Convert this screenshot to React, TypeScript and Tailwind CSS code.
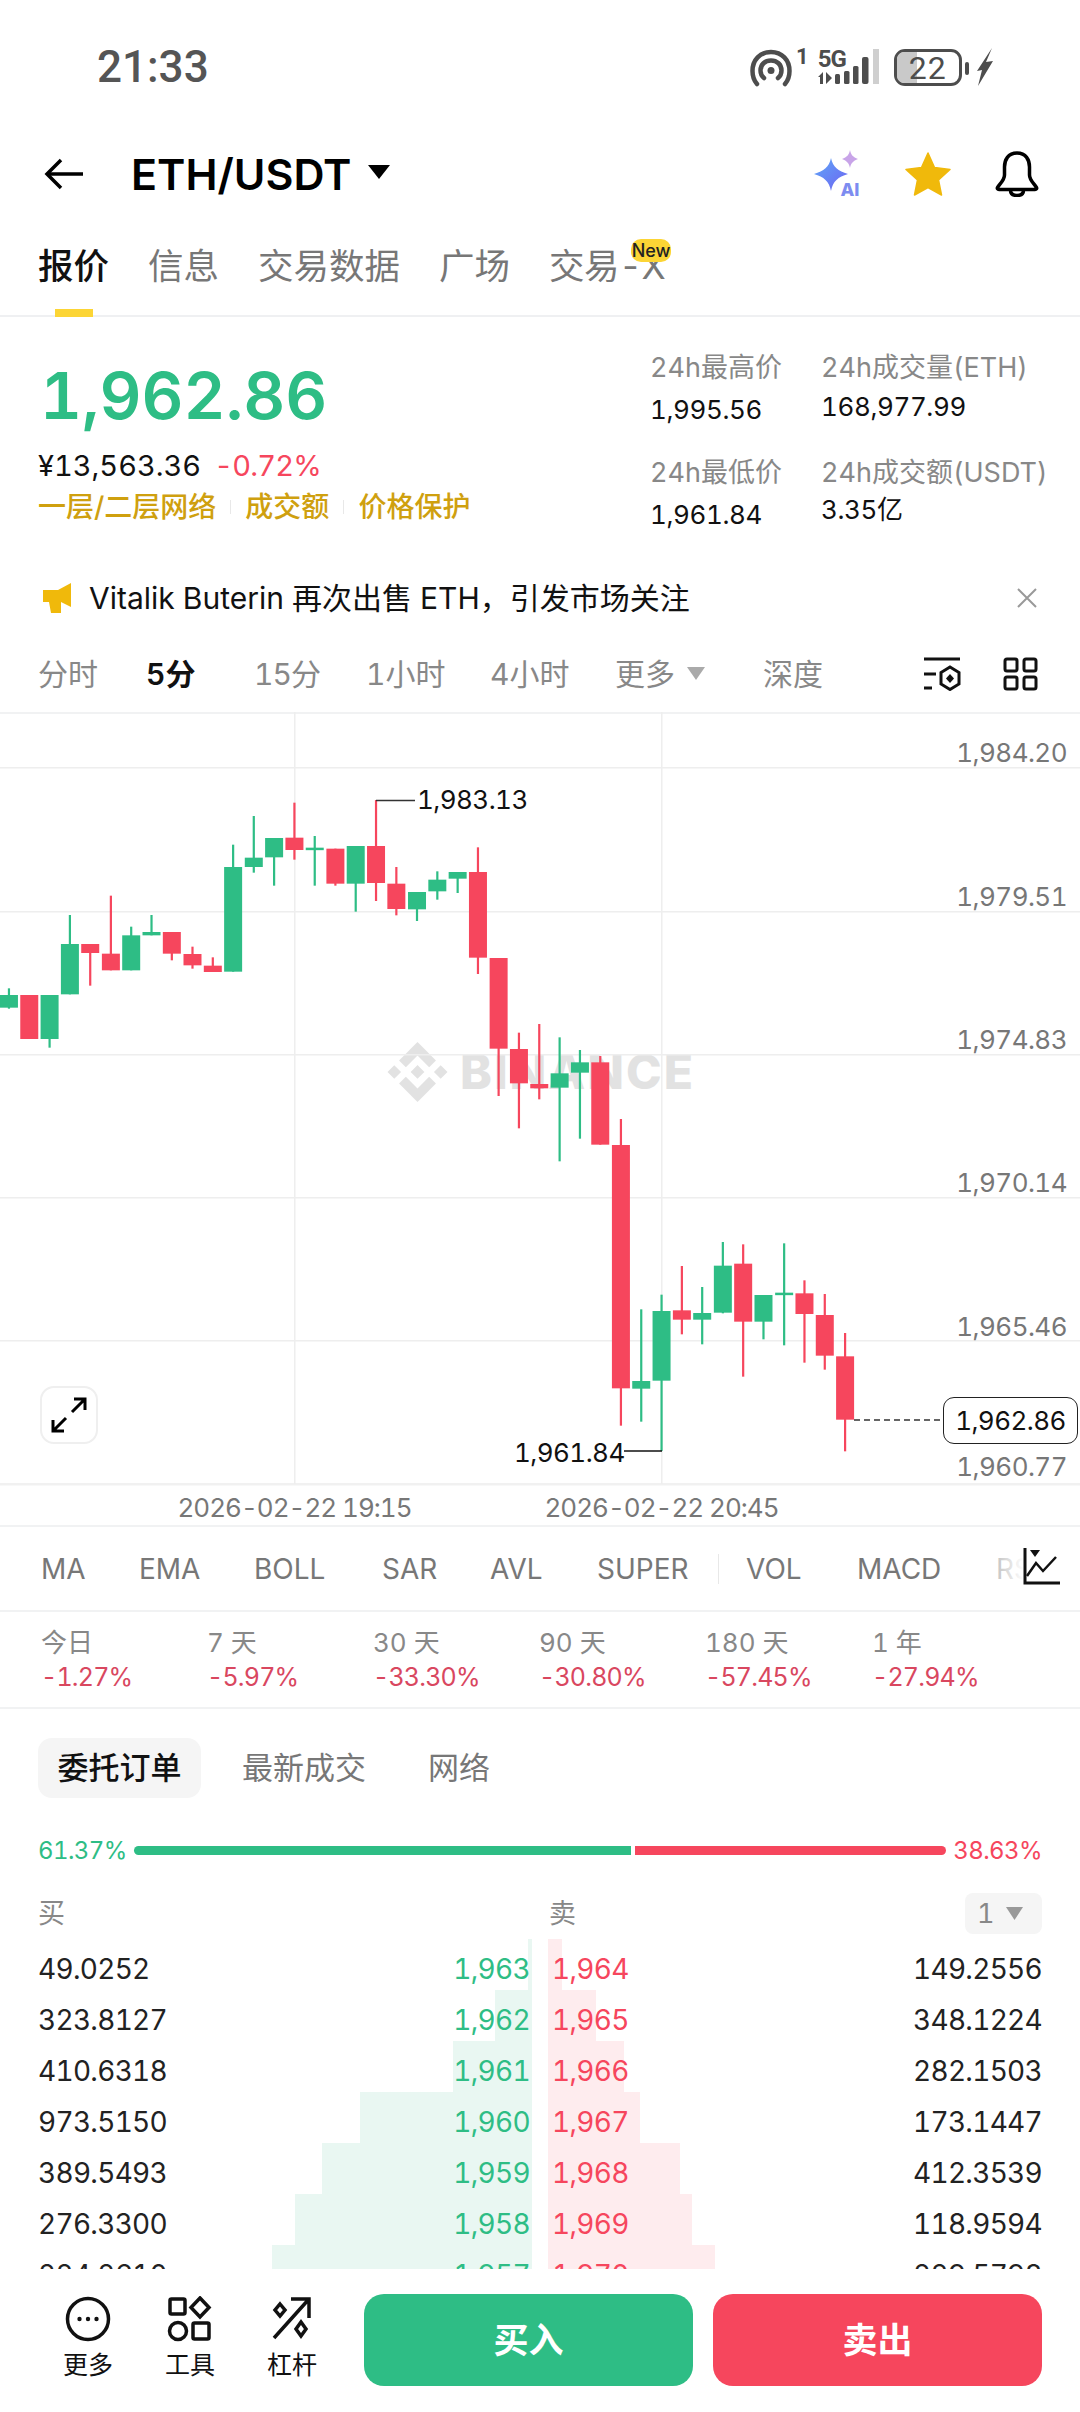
import { useMemo } from "react";

const GREEN = "#2EBD85";
const RED = "#F6465D";

// color, x, wick top, body top, body bottom, wick bottom (measured off the reference crops)
const candlesLeft: [string, number, number, number, number, number][] = [
  ["g", 26, 745, 765, 803, 806],
  ["r", 85, 765, 765, 897, 897],
  ["g", 144, 765, 765, 897, 923],
  ["g", 203, 525, 612, 763, 763],
  ["r", 262, 612, 612, 639, 737],
  ["r", 322, 467, 641, 691, 691],
  ["g", 381, 560, 586, 691, 691],
  ["g", 440, 525, 576, 586, 586],
  ["r", 499, 576, 576, 641, 661],
  ["r", 559, 620, 642, 676, 686],
  ["r", 618, 652, 677, 696, 696],
  ["g", 677, 314, 381, 695, 695],
  ["g", 737, 228, 353, 381, 398],
  ["g", 796, 294, 294, 352, 437],
  ["r", 855, 188, 293, 330, 359],
  ["g", 914, 288, 323, 330, 437],
  ["r", 974, 326, 326, 431, 437],
  ["g", 1033, 318, 318, 431, 515],
  ["r", 1092, 180, 318, 429, 483],
  ["r", 1151, 381, 431, 507, 526],
  ["g", 1211, 456, 456, 508, 543],
  ["g", 1270, 394, 419, 454, 479],
  ["g", 1329, 396, 396, 416, 459],
  ["r", 1388, 322, 396, 653, 702],
  ["r", 1448, 654, 654, 926, 1068],
  ["r", 1507, 878, 927, 1030, 1165],
  ["r", 1566, 852, 1032, 1045, 1078],
];

const candlesRight: [string, number, number, number, number, number][] = [
  ["g", 57, 892, 1000, 1043, 1264],
  ["g", 116, 930, 967, 998, 1196],
  ["r", 175, 948, 967, 1214, 1214],
  ["r", 235, 1137, 1215, 1945, 2057],
  ["g", 294, 1708, 1923, 1946, 2045],
  ["g", 353, 1664, 1713, 1922, 2133],
  ["r", 412, 1578, 1711, 1739, 1783],
  ["g", 471, 1641, 1719, 1739, 1813],
  ["g", 531, 1506, 1577, 1718, 1720],
  ["r", 590, 1513, 1571, 1745, 1910],
  ["g", 649, 1665, 1665, 1745, 1798],
  ["g", 709, 1510, 1658, 1663, 1816],
  ["r", 768, 1621, 1660, 1722, 1868],
  ["r", 827, 1662, 1725, 1847, 1889],
  ["r", 886, 1779, 1849, 2039, 2134],
];

const axisLabels = [
  { text: "1,984.20", cls: "top-[27px]" },
  { text: "1,979.51", cls: "top-[171px]" },
  { text: "1,974.83", cls: "top-[314px]" },
  { text: "1,970.14", cls: "top-[457px]" },
  { text: "1,965.46", cls: "top-[601px]" },
  { text: "1,960.77", cls: "top-[741px]" },
];

const returnsRow = [
  ["今日", "-1.27%"],
  ["7 天", "-5.97%"],
  ["30 天", "-33.30%"],
  ["90 天", "-30.80%"],
  ["180 天", "-57.45%"],
  ["1 年", "-27.94%"],
];

const bookRows = [
  { bid: "49.0252", bp: "1,963", ap: "1,964", ask: "149.2556", bw: 4, aw: 14 },
  { bid: "323.8127", bp: "1,962", ap: "1,965", ask: "348.1224", bw: 37, aw: 48 },
  { bid: "410.6318", bp: "1,961", ap: "1,966", ask: "282.1503", bw: 79, aw: 76 },
  { bid: "973.5150", bp: "1,960", ap: "1,967", ask: "173.1447", bw: 172, aw: 92 },
  { bid: "389.5493", bp: "1,959", ap: "1,968", ask: "412.3539", bw: 210, aw: 132 },
  { bid: "276.3300", bp: "1,958", ap: "1,969", ask: "118.9594", bw: 237, aw: 144 },
  { bid: "224.2610", bp: "1,957", ap: "1,970", ask: "229.5798", bw: 260, aw: 167 },
];

function StatusBar() {
  return (
    <div className="relative h-[130px] shrink-0">
      <div className="pl-[97px] pt-[42px] font-[family-name:Roboto,sans-serif] text-[44px] leading-[50px] font-medium text-[#555]">
        21:33
      </div>
      <div className="absolute left-[750px] top-[47px] flex items-start text-[#4d4d4d]">
        <svg width="42" height="38" viewBox="0 0 42 38" className="mt-[2px]" fill="none" stroke="#4d4d4d" strokeWidth="4.5" strokeLinecap="round">
          <path d="M7 35C3.5 31 2.5 26.500 2.500 22C2.500 11 10 3 21 3C32 3 39.500 11 39.500 22C39.500 26.500 38.500 31 35 35" />
          <path d="M14 29C11.500 27 10.500 24.500 10.500 21.500C10.500 15.500 15 11.500 21 11.500C27 11.500 31.500 15.500 31.500 21.500C31.500 24.500 30.500 27 28 29" />
          <circle cx="21" cy="21.500" r="3.500" fill="#4d4d4d" stroke="none" />
        </svg>
        <span className="ml-[4px] font-[family-name:Roboto,sans-serif] text-[22px] leading-[20px] font-bold">1</span>
        <div className="relative ml-[9px] h-[38px] w-[62px]">
          <span className="absolute left-0 top-[1px] font-[family-name:Roboto,sans-serif] text-[24px] leading-[22px] font-bold tracking-[-1px]">5G</span>
          <svg width="62" height="38" viewBox="0 0 62 38" className="absolute left-0 top-0">
            <path d="M0 30L5 25V37H2V30ZM8 25L14 31L8 37Z" fill="#4d4d4d" />
            <rect x="17" y="27" width="5" height="10" rx="1.500" fill="#4d4d4d" />
            <rect x="26" y="24" width="5.500" height="13" rx="1.500" fill="#4d4d4d" />
            <rect x="35" y="19" width="5.500" height="18" rx="1.500" fill="#4d4d4d" />
            <rect x="44" y="10" width="6.500" height="27" rx="2" fill="#4d4d4d" />
            <rect x="55" y="2" width="6" height="35" fill="#cfcfcf" />
          </svg>
        </div>
        <div className="relative ml-[14px] mt-[2px] flex h-[37px] w-[68px] items-center justify-center rounded-[11px] border-[3.500px] border-[#4d4d4d]">
          <div className="absolute bottom-0 left-0 top-0 w-[20px] rounded-l-[7px] bg-[#c9c9c9]" />
          <span className="relative font-[family-name:Roboto,sans-serif] text-[32px] leading-[30px] font-normal tracking-[1px]">22</span>
        </div>
        <div className="ml-[3px] mt-[15px] h-[13px] w-[4px] rounded-[2px] bg-[#4d4d4d]" />
        <svg width="16" height="38" viewBox="0 0 16 38" className="ml-[8px] mt-[1px]">
          <path d="M15 0L9 14L16 13L1 38L5 22L0 23Z" fill="#4d4d4d" />
        </svg>
      </div>
    </div>
  );
}

function Header() {
  return (
    <div className="flex h-[88px] shrink-0 items-center">
      <svg width="40" height="32" viewBox="0 0 40 32" className="ml-[44px]" fill="none" stroke="#000" strokeWidth="3.500">
        <path d="M17 2L3 16L17 30" />
        <path d="M3 16H39" />
      </svg>
      <span className="ml-[47px] text-[43px] leading-[48px] font-semibold text-black">ETH/USDT</span>
      <svg width="22" height="14" viewBox="0 0 22 14" className="ml-[17px] mt-[-4px]">
        <path d="M0 0H22L11 14Z" fill="#000" />
      </svg>
      <div className="relative ml-[424px] h-[48px] w-[50px]">
        <svg width="50" height="48" viewBox="0 0 50 48" className="absolute left-0 top-0">
          <defs>
            <linearGradient id="aistar" x1="0" y1="0" x2="1" y2="1">
              <stop offset="0" stopColor="#5ea8f7" />
              <stop offset="1" stopColor="#6f62f2" />
            </linearGradient>
          </defs>
          <path d="M17 8C19 17 24 21 34 24C24 27 19 31 17 41C15 31 10 27 0 24C10 21 15 17 17 8Z" fill="url(#aistar)" />
          <path d="M36 0C37 5 39 7 44 9C39 11 37 13 36 18C35 13 33 11 28 9C33 7 35 5 36 0Z" fill="#c8a4e8" />
        </svg>
        <span className="absolute left-[26px] top-[31px] text-[18px] leading-[18px] font-extrabold text-[#7d8cf0]">AI</span>
      </div>
      <svg width="46" height="44" viewBox="0 0 46 44" className="ml-[41px]">
        <path d="M23 1L29.500 15.500L45 17.500L33.500 28L36.500 43L23 35.500L9.500 43L12.500 28L1 17.500L16.500 15.500Z" fill="#F0B90B" stroke="#F0B90B" strokeWidth="1.500" strokeLinejoin="round" />
      </svg>
      <svg width="44" height="46" viewBox="0 0 44 46" className="ml-[44px]" fill="none" stroke="#000" strokeWidth="3.500" strokeLinejoin="round">
        <path d="M22 2C13 2 9.500 9 9.500 16V24C9.500 29 5.500 32 2.500 36.500C2 37.500 2.500 38.500 4 38.500H40C41.500 38.500 42 37.500 41.500 36.500C38.500 32 34.500 29 34.500 24V16C34.500 9 31 2 22 2Z" />
        <path d="M15.500 39C15.500 42.500 18 44.500 22 44.500C26 44.500 28.500 42.500 28.500 39" />
      </svg>
    </div>
  );
}

function Tabs() {
  return (
    <div className="flex h-[99px] shrink-0 items-start gap-[39px] border-b-2 border-[#eff0f2] pl-[38px] pt-[24px] text-[35.5px] leading-[50px] text-[#777]">
      <div className="relative h-[75px] font-medium text-[#111]">
        报价
        <div className="absolute bottom-0 left-[17px] h-[8px] w-[38px] bg-[#FCD535]" />
      </div>
      <div>信息</div>
      <div>交易数据</div>
      <div>广场</div>
      <div className="relative tracking-[-0.5px]">
        交易-X
        <span className="absolute left-[82px] top-[-3px] flex h-[23px] w-[40px] items-center justify-center rounded-[10px] bg-[#FCD535] text-[18px] leading-[18px] font-medium tracking-normal text-[#222]">
          New
        </span>
      </div>
    </div>
  );
}

function Stat({ label, value, valueClass }: { label: string; value: string; valueClass: string }) {
  return (
    <div className="h-[89px] whitespace-nowrap">
      <div className="text-[27px] leading-[34px] text-[#888]">{label}</div>
      <div className={`text-[26px] leading-[32px] tracking-[-0.4px] text-[#111] ${valueClass}`}>{value}</div>
    </div>
  );
}

function PriceBlock() {
  return (
    <div className="flex h-[243px] shrink-0">
      <div className="w-[611px] pl-[38px]">
        <div className="ml-[2px] mt-[42px] text-[65px] leading-[74px] font-semibold text-[#2EBD85]">1,962.86</div>
        <div className="mt-[15px] flex items-center text-[29px] leading-[36px] font-normal">
          <span className="text-[29px] text-[#111]">¥13,563.36</span>
          <span className="ml-[13px] tracking-[-0.8px] text-[#F6465D]">-0.72%</span>
        </div>
        <div className="mt-[4px] flex items-center text-[28px] leading-[38px] font-medium text-[#CFA00F]">
          <span>一层/二层网络</span>
          <span className="mx-[14px] h-[14px] w-[1px] bg-[#e8e8e8]" />
          <span>成交额</span>
          <span className="mx-[14px] h-[14px] w-[1px] bg-[#e8e8e8]" />
          <span>价格保护</span>
        </div>
      </div>
      <div className="grid w-[469px] grid-cols-[171px_1fr] pt-[34px] pl-[39px]">
        <Stat label="24h最高价" value="1,995.56" valueClass="mt-[9px]" />
        <Stat label="24h成交量(ETH)" value="168,977.99" valueClass="mt-[6px]" />
        <Stat label="24h最低价" value="1,961.84" valueClass="mt-[9px]" />
        <Stat label="24h成交额(USDT)" value="3.35亿" valueClass="mt-[4px]" />
      </div>
    </div>
  );
}

function Announcement() {
  return (
    <div className="flex h-[75px] shrink-0 items-center">
      <svg width="32" height="32" viewBox="0 0 32 32" className="ml-[42px]">
        <path d="M1 8H16L29 1V25L19 20V31H9L7 20H1Z" fill="#F0B90B" />
      </svg>
      <span className="ml-[15px] text-[30px] leading-[40px] text-[#111]">Vitalik Buterin 再次出售 ETH，引发市场关注</span>
      <svg width="22" height="22" viewBox="0 0 22 22" className="ml-auto mr-[42px]" fill="none" stroke="#999" strokeWidth="2">
        <path d="M2 2L20 20M20 2L2 20" />
      </svg>
    </div>
  );
}

function IntervalRow() {
  return (
    <div className="flex h-[77px] shrink-0 items-center pl-[38px] text-[30px] leading-[40px] text-[#888]">
      <span className="w-[108px]">分时</span>
      <span className="w-[108px] font-semibold text-[#111]">5分</span>
      <span className="w-[112px] tracking-[-1px]">15分</span>
      <span className="w-[124px]">1小时</span>
      <span className="w-[125px]">4小时</span>
      <span className="flex w-[148px] items-center">
        更多
        <svg width="18" height="13" viewBox="0 0 18 13" className="ml-[12px]">
          <path d="M0 0H18L9 13Z" fill="#aaa" />
        </svg>
      </span>
      <span className="w-[161px]">深度</span>
      <svg width="38" height="34" viewBox="0 0 38 34" fill="none" stroke="#111" strokeWidth="3">
        <path d="M0 2H36" />
        <path d="M0 17H12M0 31H8" />
        <path d="M26 10L35 15.500V27L26 32.500L17 27V15.500Z" />
        <path d="M26 17L30 21.500L26 26L22 21.500Z" fill="#111" stroke="none" />
      </svg>
      <svg width="35" height="34" viewBox="0 0 35 34" className="ml-[41px]" fill="none" stroke="#111" strokeWidth="3">
        <rect x="2" y="2" width="12" height="12" rx="2" />
        <rect x="21" y="2" width="12" height="12" rx="2" />
        <rect x="2" y="20" width="12" height="12" rx="2" />
        <rect x="21" y="20" width="12" height="12" rx="2" />
      </svg>
    </div>
  );
}

function Chart() {
  // candles are measured in crop units: x / 2.904, y = 740 + z / 3 on the page
  const candles = useMemo(() => {
    const py = (z: number) => 28 + z / 3;
    const build = (rows: typeof candlesLeft, base: number) =>
      rows.map(([c, x, wt, bt, bb, wb]) => ({
        fill: c === "g" ? GREEN : RED,
        cx: base + x / 2.904,
        wt: py(wt),
        bt: py(bt),
        bb: py(bb),
        wb: py(wb),
      }));
    return [...build(candlesLeft, 0), ...build(candlesRight, 540)];
  }, []);

  return (
    <div className="relative h-[813px] shrink-0 overflow-hidden">
      <div className="absolute left-[387px] top-[330px] flex items-center text-[#e2e2e2]">
        <svg width="61" height="60" viewBox="0 0 126.610 126.610" fill="#e2e2e2">
          <path d="M38.730 53.200l24.590-24.580 24.600 24.600 14.300-14.310L63.320 0 24.420 38.900l14.310 14.300z" />
          <path d="M0 63.310l14.300-14.310 14.310 14.310-14.310 14.300z" />
          <path d="M38.730 73.410l24.590 24.590 24.600-24.600 14.310 14.290-38.900 38.910-38.910-38.880-.02-.02z" />
          <path d="M98 63.310l14.300-14.310 14.310 14.300-14.310 14.320z" />
          <path d="M77.830 63.300L63.320 48.780 52.590 59.510l-1.240 1.230-2.540 2.540 14.510 14.500 14.510-14.470z" />
        </svg>
        <span className="ml-[12px] text-[48px] leading-[46px] font-extrabold tracking-[2px]">BINANCE</span>
      </div>
      <svg width="1080" height="813" viewBox="0 0 1080 813" className="absolute left-0 top-0">
        <rect x="0" y="0" width="1080" height="2" fill="#f1f2f3" />
        {[55, 199, 342, 485, 628].map((y) => (
          <rect key={y} x="0" y={y} width="1080" height="1.500" fill="#eeeeee" />
        ))}
        <rect x="0" y="771" width="1080" height="2.500" fill="#f1f1f1" />
        <rect x="294" y="0" width="1.500" height="772" fill="#eeeeee" />
        <rect x="661" y="0" width="1.500" height="772" fill="#eeeeee" />
        {candles.map((k) => (
          <g key={k.cx} fill={k.fill}>
            <rect x={k.cx - 1.1} y={k.wt} width="2.200" height={k.wb - k.wt} />
            <rect x={k.cx - 9} y={k.bt} width="18" height={Math.max(k.bb - k.bt, 2.500)} />
          </g>
        ))}
        <path d="M376 88.500H415" stroke="#333" strokeWidth="1.500" />
        <path d="M624 739H662" stroke="#111" strokeWidth="1.500" />
        <path d="M854 708H943" stroke="#333" strokeWidth="1.500" strokeDasharray="6 4" />
      </svg>

      {axisLabels.map((l) => (
        <div key={l.text} className={`absolute right-[13px] text-[26px] leading-[28px] tracking-[-0.55px] text-[#777] ${l.cls}`}>
          {l.text}
        </div>
      ))}
      <div className="absolute left-[417px] top-[74px] text-[26px] leading-[28px] tracking-[-0.55px] text-[#111]">1,983.13</div>
      <div className="absolute left-[514px] top-[727px] text-[26px] leading-[28px] tracking-[-0.55px] text-[#111]">1,961.84</div>
      <div className="absolute left-[943px] top-[685px] flex h-[47px] w-[135px] items-center justify-center rounded-[11px] border-[1.500px] border-[#222] bg-white text-[26px] leading-[28px] tracking-[-0.55px] text-[#111]">
        1,962.86
      </div>
      <div className="absolute left-[40px] top-[674px] flex h-[58px] w-[58px] items-center justify-center rounded-[14px] border-2 border-[#efefef] bg-white">
        <svg width="36" height="36" viewBox="0 0 36 36" fill="none" stroke="#000" strokeWidth="3">
          <path d="M21 15L34 2M23 2H34V13" />
          <path d="M15 21L2 34M13 34H2V23" />
        </svg>
      </div>
      <div className="absolute left-[165px] top-[782px] w-[259px] whitespace-nowrap text-center text-[26px] leading-[28px] tracking-[-1px] text-[#777]">2026-02-22 19:15</div>
      <div className="absolute left-[532px] top-[782px] w-[259px] whitespace-nowrap text-center text-[26px] leading-[28px] tracking-[-1px] text-[#777]">2026-02-22 20:45</div>
    </div>
  );
}

function IndicatorRow() {
  return (
    <div className="relative flex h-[85px] shrink-0 items-center border-t-2 border-[#f1f2f3] pl-[41px] text-[28px] leading-[36px] text-[#777]">
      <span className="w-[98px]">MA</span>
      <span className="w-[115px]">EMA</span>
      <span className="w-[128px]">BOLL</span>
      <span className="w-[108px]">SAR</span>
      <span className="w-[107px]">AVL</span>
      <span className="w-[121px]">SUPER</span>
      <span className="h-[30px] w-[28px] border-l border-[#e8e8e8]" />
      <span className="w-[111px]">VOL</span>
      <span className="w-[139px]">MACD</span>
      <span>RSI</span>
      <div className="absolute bottom-0 right-0 top-0 w-[94px] bg-gradient-to-r from-white/40 to-white to-40%" />
      <svg width="38" height="38" viewBox="0 0 38 38" className="absolute left-[1023px] top-[21px]" fill="none" stroke="#111" strokeWidth="3">
        <path d="M2 0V35H37" />
        <path d="M4 28L13 15L20 23L33 9" strokeWidth="2.500" />
        <path d="M7 2H17L12 9Z" fill="#111" stroke="none" />
      </svg>
    </div>
  );
}

function ReturnsRow() {
  return (
    <div className="grid h-[99px] shrink-0 grid-cols-[166px_166px_166px_166px_167px_1fr] border-y-2 border-[#f1f2f3] pl-[41px] pt-[14px]">
      {returnsRow.map(([label, value]) => (
        <div key={label} className="whitespace-nowrap">
          <div className="text-[26px] leading-[34px] text-[#888]">{label}</div>
          <div className="text-[25px] leading-[34px] tracking-[-0.8px] text-[#D9475F]">{value}</div>
        </div>
      ))}
    </div>
  );
}

function OrderTabs() {
  return (
    <div className="flex h-[127px] shrink-0 items-start pl-[38px] pt-[29px] text-[31px] leading-[60px] text-[#777]">
      <span className="flex h-[60px] w-[163px] items-center justify-center rounded-[14px] bg-[#f5f5f5] font-medium text-[#111]">委托订单</span>
      <span className="ml-[41px]">最新成交</span>
      <span className="ml-[62px]">网络</span>
    </div>
  );
}

function OrderBook() {
  return (
    <div className="flex min-h-0 flex-1 flex-col overflow-hidden">
      <div className="flex h-[29px] shrink-0 items-center px-[38px] text-[24px] leading-[30px] tracking-[-0.6px]">
        <span className="w-[96px] text-[#2EBD85]">61.37%</span>
        <div className="h-[9px] w-[497px] rounded-l-full bg-[#2EBD85]" />
        <div className="ml-[4px] h-[9px] w-[311px] rounded-r-full bg-[#F6465D]" />
        <span className="ml-auto text-[#F6465D]">38.63%</span>
      </div>
      <div className="mt-[22px] flex h-[51px] shrink-0 items-center pl-[38px] pt-[2px] text-[27px] leading-[34px] text-[#888]">
        <span className="w-[511px]">买</span>
        <span>卖</span>
        <span className="ml-auto mr-[38px] flex h-[41px] w-[77px] items-center rounded-[8px] bg-[#f5f5f5] pl-[12px]">
          1
          <svg width="17" height="13" viewBox="0 0 17 13" className="ml-[11px]">
            <path d="M0 0H17L8.500 13Z" fill="#999" />
          </svg>
        </span>
      </div>
      <div className="mt-[1px]">
        {bookRows.map((r) => (
          <div key={r.bid} className="flex h-[51px] items-start text-[28px] leading-[60px] tracking-[-0.7px]">
            <div className="relative flex h-full w-[532px] justify-between pl-[38px] pr-[2px]">
              <div className="absolute bottom-0 right-0 top-0 bg-[#E9F7F2]" style={{ width: r.bw }} />
              <span className="relative text-[#222]">{r.bid}</span>
              <span className="relative text-[#2EBD85]">{r.bp}</span>
            </div>
            <div className="relative ml-[16px] flex h-full w-[532px] justify-between pl-[4px] pr-[38px]">
              <div className="absolute bottom-0 left-0 top-0 bg-[#FEECEE]" style={{ width: r.aw }} />
              <span className="relative text-[#F6465D]">{r.ap}</span>
              <span className="relative text-[#222]">{r.ask}</span>
            </div>
          </div>
        ))}
      </div>
    </div>
  );
}

function BottomBar() {
  return (
    <div className="flex h-[143px] shrink-0 items-start bg-white pt-[25px]">
      <div className="flex w-[364px] pl-[37px] pt-[2px]">
        <div className="flex w-[102px] flex-col items-center">
          <svg width="46" height="46" viewBox="0 0 46 46" fill="none" stroke="#111" strokeWidth="3.500">
            <circle cx="23" cy="23" r="20.500" />
            <circle cx="14.500" cy="23" r="2.200" fill="#111" stroke="none" />
            <circle cx="23" cy="23" r="2.200" fill="#111" stroke="none" />
            <circle cx="31.500" cy="23" r="2.200" fill="#111" stroke="none" />
          </svg>
          <span className="mt-[8px] text-[25px] leading-[30px] text-[#111]">更多</span>
        </div>
        <div className="flex w-[102px] flex-col items-center">
          <svg width="46" height="46" viewBox="0 0 46 46" fill="none" stroke="#111" strokeWidth="3.500">
            <rect x="3" y="3" width="15" height="15" rx="1.500" />
            <path d="M33 2L42 11.500L33 21L24 11.500Z" />
            <circle cx="11" cy="35" r="8.500" />
            <rect x="26" y="27" width="16" height="16" rx="1.500" />
          </svg>
          <span className="mt-[8px] text-[25px] leading-[30px] text-[#111]">工具</span>
        </div>
        <div className="flex w-[102px] flex-col items-center">
          <svg width="46" height="46" viewBox="0 0 46 46" fill="none" stroke="#111" strokeWidth="3.500">
            <path d="M5 42L40 3M22 3H40V22" />
            <path d="M11 8L16 14L11 20L6 14Z" />
            <path d="M32 26L37 33L32 40L27 33Z" />
          </svg>
          <span className="mt-[8px] text-[25px] leading-[30px] text-[#111]">杠杆</span>
        </div>
      </div>
      <div className="flex h-[92px] w-[329px] items-center justify-center rounded-[20px] bg-[#2EBD85] text-[35px] font-semibold text-white">买入</div>
      <div className="ml-[20px] flex h-[92px] w-[329px] items-center justify-center rounded-[20px] bg-[#F6465D] text-[35px] font-semibold text-white">卖出</div>
    </div>
  );
}

export default function App() {
  return (
    <div className="flex h-[2412px] w-[1080px] flex-col overflow-hidden bg-white font-[family-name:Inter,'Noto_Sans_CJK_SC',sans-serif] tabular-nums">
      <StatusBar />
      <Header />
      <Tabs />
      <PriceBlock />
      <Announcement />
      <IntervalRow />
      <Chart />
      <IndicatorRow />
      <ReturnsRow />
      <OrderTabs />
      <OrderBook />
      <BottomBar />
    </div>
  );
}
